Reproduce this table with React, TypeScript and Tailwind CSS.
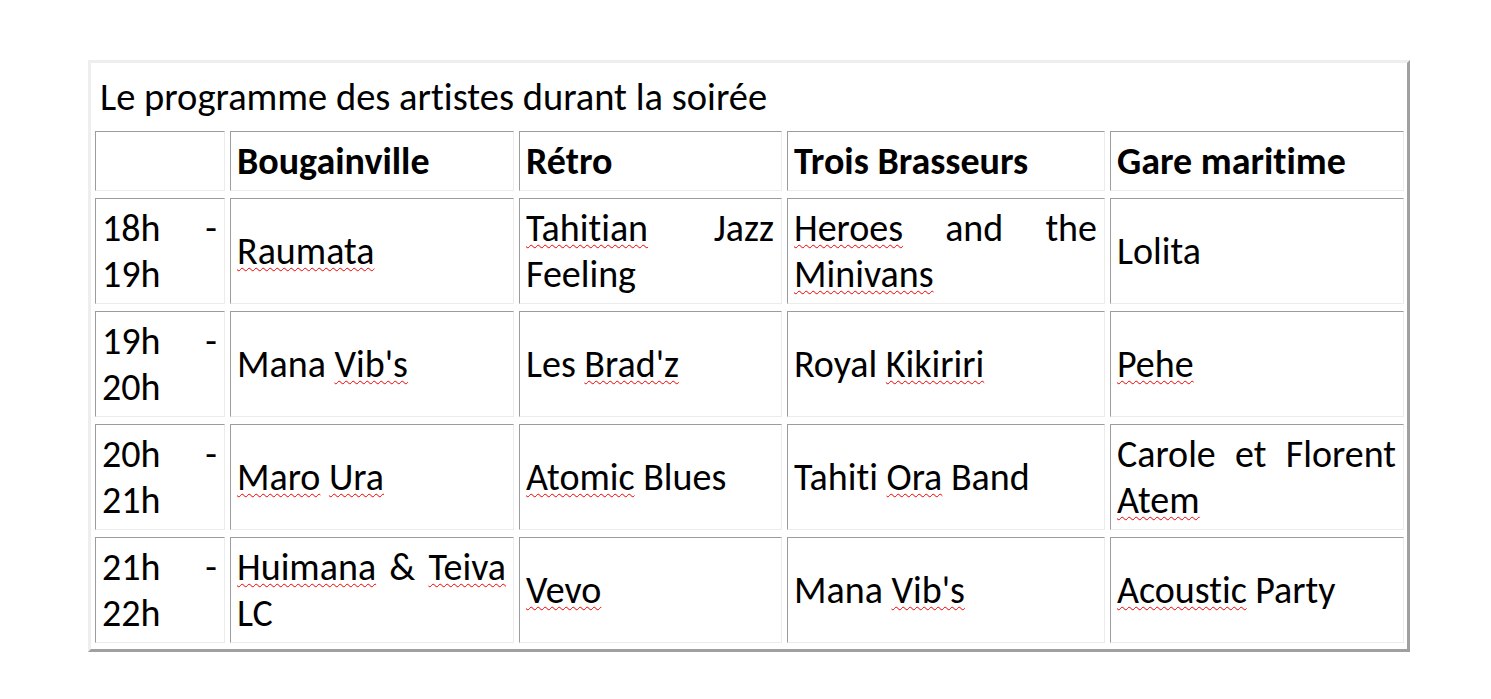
import React from "react";

const S = ({ children }: { children: React.ReactNode }) => (
  <span className="underline decoration-wavy decoration-[#f00000] decoration-[1.2px] underline-offset-[3px] [text-decoration-skip-ink:none]">
    {children}
  </span>
);

const Cell = ({ children, bold }: { children?: React.ReactNode; bold?: boolean }) => (
  <div
    className={
      "flex items-center border border-t-[#9c9c9c] border-l-[#9c9c9c] border-r-[#ececec] border-b-[#ececec] pl-[6px] pr-[7px] " +
      (bold ? "font-bold" : "")
    }
  >
    <div className="w-full text-justify">{children}</div>
  </div>
);

export default function App() {
  return (
    <div className="min-h-[699px] w-[1491px] bg-white text-black [font-family:Carlito,Calibri,Lato,sans-serif] [font-variant-ligatures:none] text-[38px] leading-[46px]">
      <div className="pt-[60px] pl-[88px]">
        <div className="w-[1322px] border-[3px] border-t-[#eeeeee] border-l-[#eeeeee] border-r-[#a0a0a0] border-b-[#a0a0a0] pl-[4px] pr-[3px] pb-[6px]">
          <div className="h-[68px] pl-[5px] pt-[11px] text-[38.5px]">Le programme des artistes durant la soirée</div>
          <div className="grid grid-cols-[130px_284px_263px_318px_294px] grid-rows-[60px_106px_106px_106px_106px] gap-x-[5px] gap-y-[7px]">
            <Cell bold />
            <Cell bold>Bougainville</Cell>
            <Cell bold>Rétro</Cell>
            <Cell bold>Trois Brasseurs</Cell>
            <Cell bold>Gare maritime</Cell>

            <Cell>18h - 19h</Cell>
            <Cell><S>Raumata</S></Cell>
            <Cell><S>Tahitian</S> Jazz Feeling</Cell>
            <Cell><S>Heroes</S> and the <S>Minivans</S></Cell>
            <Cell>Lolita</Cell>

            <Cell>19h - 20h</Cell>
            <Cell>Mana <S>Vib's</S></Cell>
            <Cell>Les <S>Brad'z</S></Cell>
            <Cell>Royal <S>Kikiriri</S></Cell>
            <Cell><S>Pehe</S></Cell>

            <Cell>20h - 21h</Cell>
            <Cell><S>Maro</S> <S>Ura</S></Cell>
            <Cell><S>Atomic</S> Blues</Cell>
            <Cell>Tahiti <S>Ora</S> Band</Cell>
            <Cell>Carole et Florent <S>Atem</S></Cell>

            <Cell>21h - 22h</Cell>
            <Cell><S>Huimana</S> &amp; <S>Teiva</S> LC</Cell>
            <Cell><S>Vevo</S></Cell>
            <Cell>Mana <S>Vib's</S></Cell>
            <Cell><S>Acoustic</S> Party</Cell>
          </div>
        </div>
      </div>
    </div>
  );
}
